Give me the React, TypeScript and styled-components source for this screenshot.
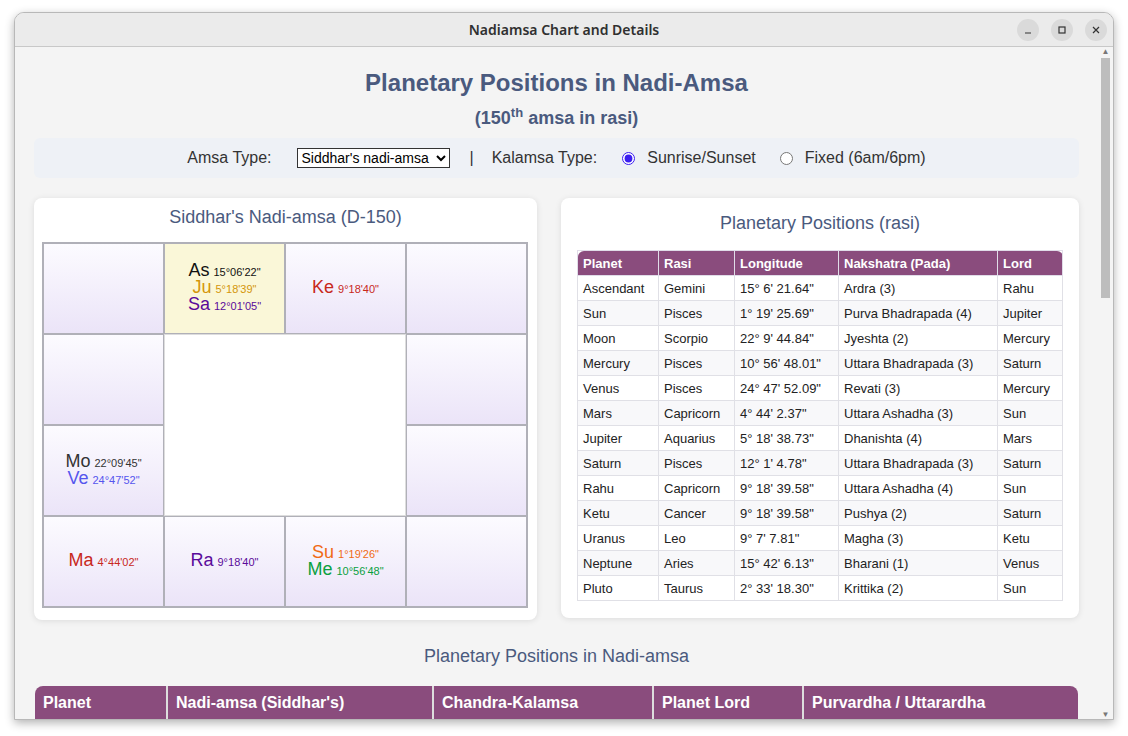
import React from 'react'
import styled, { createGlobalStyle } from 'styled-components'

const Global = createGlobalStyle`
  html, body { margin: 0; padding: 0; background: #ffffff; }
  body { font-family: "Liberation Sans", Arial, sans-serif; }
`

const Desktop = styled.div`
  width: 1128px;
  height: 736px;
  padding: 12px 14px 18px 14px;
  box-sizing: border-box;
`

const Window = styled.div`
  height: 706px;
  border: 1px solid #b8b8b8;
  border-radius: 10px 10px 0 0;
  box-shadow: 0 3px 10px rgba(0, 0, 0, 0.3);
  display: flex;
  flex-direction: column;
  overflow: hidden;
  background: #f4f4f4;
`

const TitleBar = styled.div`
  height: 33px;
  flex-shrink: 0;
  background: #ebebeb;
  border-bottom: 1px solid #c8c8c8;
  display: flex;
  align-items: center;
  justify-content: center;
  position: relative;
  font-family: "Noto Sans", sans-serif;
  font-weight: 600;
  font-size: 14px;
  color: #303030;
`

const WinButtons = styled.div`
  position: absolute;
  right: 6px;
  top: 6px;
  display: flex;
  gap: 12px;
`

const WinButton = styled.div`
  width: 22px;
  height: 22px;
  border-radius: 50%;
  background: #dadada;
  display: flex;
  align-items: center;
  justify-content: center;
`

const Body = styled.div`
  flex: 1;
  display: flex;
  min-height: 0;
`

const Content = styled.div`
  flex: 1;
  overflow: hidden;
  padding: 20px 19px 0 19px;
`

const ScrollTrack = styled.div`
  width: 15px;
  background: #f4f4f4;
  display: flex;
  flex-direction: column;
  align-items: center;
  font-size: 8px;
  color: #777;
`

const ScrollThumb = styled.div`
  width: 9px;
  height: 240px;
  background: #bdbdbd;
  margin: 2px 0;
`

const Spacer = styled.div`
  flex: 1;
`

const MainTitle = styled.h1`
  margin: 0;
  text-align: center;
  font-size: 24px;
  font-weight: bold;
  color: #4a5a7e;
  line-height: 32px;
`

const SubTitle = styled.h2`
  margin: 1px 0 0 0;
  text-align: center;
  font-size: 18px;
  font-weight: bold;
  color: #4a5a7e;
  line-height: 26px;
  sup { font-size: 13px; }
`

const Controls = styled.div`
  margin-top: 7px;
  height: 40px;
  background: #eef1f6;
  border-radius: 6px;
  display: flex;
  align-items: center;
  justify-content: center;
  font-size: 16px;
  color: #333;
`

const Label = styled.span`
  margin-right: 25px;
`

const Select = styled.select`
  font-family: "Liberation Sans", Arial, sans-serif;
  font-size: 14px;
  height: 20px;
  width: 153px;
  border: 1px solid #333;
  background: #fff;
  margin-right: 20px;
`

const Sep = styled.span`
  margin-right: 18px;
`

const Radio = styled.input`
  margin: 0 12px 0 0;
  width: 13px;
  height: 13px;
  accent-color: #3b1ef0;
`

const RadioText = styled.span`
  margin-right: 24px;
`

const Row = styled.div`
  display: flex;
  gap: 24px;
  margin-top: 20px;
  align-items: flex-start;
`

const Card = styled.div<{ $w: number; $h: number }>`
  width: ${p => p.$w}px;
  height: ${p => p.$h}px;
  box-sizing: border-box;
  background: #fff;
  border-radius: 8px;
  box-shadow: 0 1px 6px rgba(0, 0, 0, 0.1);
  padding: 8px;
`

const CardTitle = styled.div<{ $mt: number }>`
  text-align: center;
  font-size: 18px;
  color: #4a5a7e;
  margin-top: ${p => p.$mt}px;
  line-height: 22px;
`

const Grid = styled.div`
  margin-top: 14px;
  display: grid;
  grid-template-columns: repeat(4, 1fr);
  grid-template-rows: repeat(4, 91px);
  border: 1px solid #b0b0b8;
  width: 486px;
  box-sizing: border-box;
`

const Cell = styled.div<{ $hl?: boolean }>`
  border: 1px solid #b0b0b8;
  background: ${p => (p.$hl ? '#faf7d8' : 'linear-gradient(#fcfbff, #ebe4f8)')};
  display: flex;
  flex-direction: column;
  align-items: center;
  justify-content: center;
`

const Center = styled.div`
  grid-column: 2 / 4;
  grid-row: 2 / 4;
  background: #fff;
  border: 1px solid #ddd;
`

const Planet = styled.div<{ $c: string }>`
  color: ${p => p.$c};
  font-size: 18px;
  line-height: 15px;
  white-space: nowrap;
  small { font-size: 11px; margin-left: 4px; }
`

const Table = styled.table`
  border-collapse: collapse;
  width: 486px;
  margin-top: 16px;
  margin-left: 8px;
  font-size: 13px;
  color: #222;
  th {
    background: #8a4c7d;
    color: #fff;
    text-align: left;
    font-weight: bold;
    height: 24px;
    padding: 0 5px;
    border: 1px solid #e0dce8;
  }
  th:first-child { border-top-left-radius: 6px; }
  th:last-child { border-top-right-radius: 6px; }
  td {
    height: 24px;
    padding: 0 5px;
    border: 1px solid #e0e0e6;
  }
  tr:nth-child(even) td { background: #f8f8fa; }
`

const SectionTitle = styled.div`
  text-align: center;
  font-size: 18px;
  color: #4a5a7e;
  margin-top: 26px;
`

const BigTable = styled.table`
  margin-top: 19px;
  width: 1043px;
  margin-left: 1px;
  border-collapse: collapse;
  th {
    background: #8a4c7d;
    color: #fff;
    text-align: left;
    font-size: 16px;
    font-weight: bold;
    height: 34px;
    padding: 0 8px;
    border-left: 2px solid #ddd;
  }
  th:first-child { border-left: none; border-top-left-radius: 8px; }
  th:last-child { border-top-right-radius: 8px; }
`

type P = [string, string, string]

const cells: (P[] | 'center' | 'skip')[] = [
  [], [['As', '15°06\'22"', '#111'], ['Ju', '5°18\'39"', '#d4960a'], ['Sa', '12°01\'05"', '#5a0a9a']], [['Ke', '9°18\'40"', '#c8281c']], [],
  [], 'center', 'skip', [],
  [['Mo', '22°09\'45"', '#333'], ['Ve', '24°47\'52"', '#5555ee']], 'skip', 'skip', [],
  [['Ma', '4°44\'02"', '#c8281c']], [['Ra', '9°18\'40"', '#5a0a9a']], [['Su', '1°19\'26"', '#f06a14'], ['Me', '10°56\'48"', '#0aa040']], [],
]

const rows = [
  ['Ascendant', 'Gemini', '15° 6\' 21.64"', 'Ardra (3)', 'Rahu'],
  ['Sun', 'Pisces', '1° 19\' 25.69"', 'Purva Bhadrapada (4)', 'Jupiter'],
  ['Moon', 'Scorpio', '22° 9\' 44.84"', 'Jyeshta (2)', 'Mercury'],
  ['Mercury', 'Pisces', '10° 56\' 48.01"', 'Uttara Bhadrapada (3)', 'Saturn'],
  ['Venus', 'Pisces', '24° 47\' 52.09"', 'Revati (3)', 'Mercury'],
  ['Mars', 'Capricorn', '4° 44\' 2.37"', 'Uttara Ashadha (3)', 'Sun'],
  ['Jupiter', 'Aquarius', '5° 18\' 38.73"', 'Dhanishta (4)', 'Mars'],
  ['Saturn', 'Pisces', '12° 1\' 4.78"', 'Uttara Bhadrapada (3)', 'Saturn'],
  ['Rahu', 'Capricorn', '9° 18\' 39.58"', 'Uttara Ashadha (4)', 'Sun'],
  ['Ketu', 'Cancer', '9° 18\' 39.58"', 'Pushya (2)', 'Saturn'],
  ['Uranus', 'Leo', '9° 7\' 7.81"', 'Magha (3)', 'Ketu'],
  ['Neptune', 'Aries', '15° 42\' 6.13"', 'Bharani (1)', 'Venus'],
  ['Pluto', 'Taurus', '2° 33\' 18.30"', 'Krittika (2)', 'Sun'],
]

export default function App() {
  return (
    <Desktop>
      <Global />
      <Window>
        <TitleBar>
          Nadiamsa Chart and Details
          <WinButtons>
            <WinButton>
              <svg width="10" height="10"><path d="M2 8h6" stroke="#333" strokeWidth="1.2" /></svg>
            </WinButton>
            <WinButton>
              <svg width="10" height="10"><rect x="2" y="2" width="6" height="6" fill="none" stroke="#333" strokeWidth="1.2" /></svg>
            </WinButton>
            <WinButton>
              <svg width="10" height="10"><path d="M2 2l6 6M8 2l-6 6" stroke="#333" strokeWidth="1.2" /></svg>
            </WinButton>
          </WinButtons>
        </TitleBar>
        <Body>
          <Content>
            <MainTitle>Planetary Positions in Nadi-Amsa</MainTitle>
            <SubTitle>(150<sup>th</sup> amsa in rasi)</SubTitle>
            <Controls>
              <Label>Amsa Type:</Label>
              <Select defaultValue="s">
                <option value="s">Siddhar's nadi-amsa</option>
              </Select>
              <Sep>|</Sep>
              <Label>Kalamsa Type:</Label>
              <Radio type="radio" name="k" defaultChecked />
              <RadioText>Sunrise/Sunset</RadioText>
              <Radio type="radio" name="k" />
              <span>Fixed (6am/6pm)</span>
            </Controls>
            <Row>
              <Card $w={503} $h={422}>
                <CardTitle $mt={0}>Siddhar's Nadi-amsa (D-150)</CardTitle>
                <Grid>
                  {cells.map((c, i) => {
                    if (c === 'skip') return null
                    if (c === 'center') return <Center key={i} />
                    return (
                      <Cell key={i} $hl={i === 1}>
                        {c.map(([n, d, col]) => (
                          <Planet key={n} $c={col}>
                            {n}<small>{d}</small>
                          </Planet>
                        ))}
                      </Cell>
                    )
                  })}
                </Grid>
              </Card>
              <Card $w={518} $h={420}>
                <CardTitle $mt={6}>Planetary Positions (rasi)</CardTitle>
                <Table>
                  <thead>
                    <tr>
                      <th style={{ width: 70 }}>Planet</th>
                      <th style={{ width: 65 }}>Rasi</th>
                      <th style={{ width: 93 }}>Longitude</th>
                      <th style={{ width: 148 }}>Nakshatra (Pada)</th>
                      <th>Lord</th>
                    </tr>
                  </thead>
                  <tbody>
                    {rows.map(r => (
                      <tr key={r[0]}>
                        {r.map((v, j) => <td key={j}>{v}</td>)}
                      </tr>
                    ))}
                  </tbody>
                </Table>
              </Card>
            </Row>
            <SectionTitle>Planetary Positions in Nadi-amsa</SectionTitle>
            <BigTable>
              <thead>
                <tr>
                  <th style={{ width: 115 }}>Planet</th>
                  <th style={{ width: 248 }}>Nadi-amsa (Siddhar's)</th>
                  <th style={{ width: 202 }}>Chandra-Kalamsa</th>
                  <th style={{ width: 132 }}>Planet Lord</th>
                  <th>Purvardha / Uttarardha</th>
                </tr>
              </thead>
            </BigTable>
          </Content>
          <ScrollTrack>
            <span>▲</span>
            <ScrollThumb />
            <Spacer />
            <span>▼</span>
          </ScrollTrack>
        </Body>
      </Window>
    </Desktop>
  )
}
